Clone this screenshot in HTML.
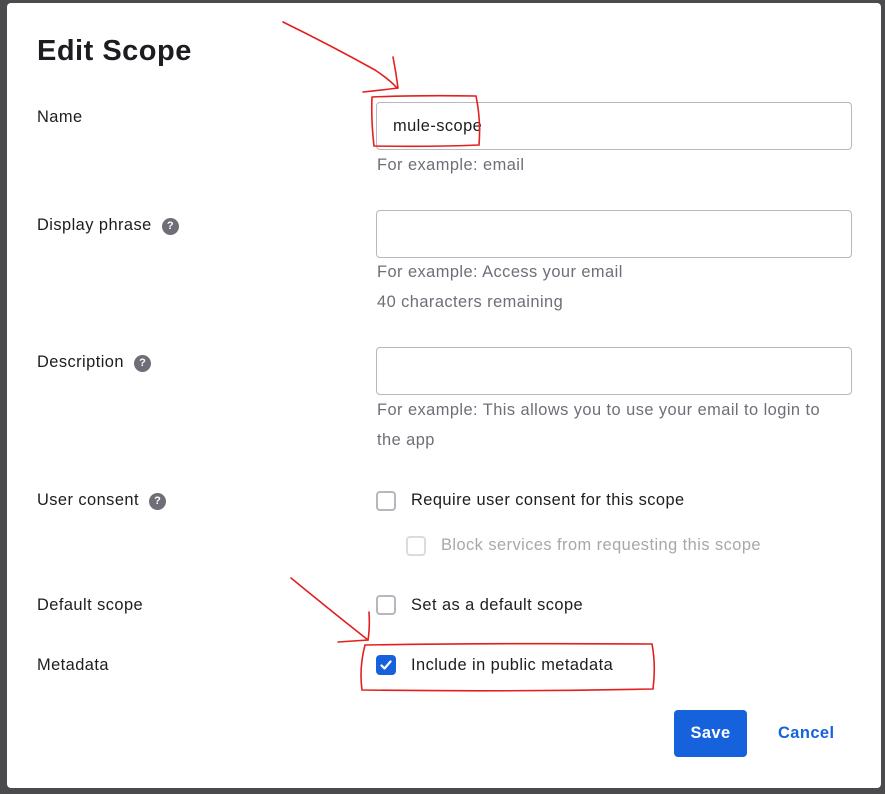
<!DOCTYPE html>
<html><head><meta charset="utf-8"><style>
*{box-sizing:border-box;margin:0;padding:0}
body{width:885px;height:794px;background:#4b4b4d;font-family:"Liberation Sans",sans-serif;position:relative;overflow:hidden;color:#1d1d21}
.modal{position:absolute;left:7px;top:3px;width:874px;height:785px;background:#fff;border-radius:4px;font-size:16.4px;letter-spacing:0.45px}
.abs{position:absolute}
h1{position:absolute;left:30px;top:32px;font-size:29px;font-weight:bold;color:#1d1d21;letter-spacing:0.5px}
.lbl{position:absolute;left:30px;color:#1d1d21}
.q{display:inline-block;width:17px;height:17px;border-radius:50%;background:#6e6e78;color:#fff;font-size:11px;font-weight:bold;text-align:center;line-height:17px;margin-left:10px;vertical-align:1px;letter-spacing:0}
.inp{position:absolute;left:369px;width:476px;height:48px;border:1px solid #b7b7bd;border-radius:4px;padding:14px 16px;color:#1d1d21}
.hint{position:absolute;left:370px;color:#6e6e78}
.cb{position:absolute;width:20px;height:20px;border:2px solid #b7b7bd;border-radius:4px;background:#fff}
.cbt{position:absolute;color:#1d1d21}
.btn{position:absolute;left:667px;top:707px;width:73px;height:47px;background:#1662dd;border-radius:4px;color:#fff;font-weight:bold;text-align:center;line-height:47px}
.cancel{position:absolute;left:771px;top:721px;color:#1662dd;font-weight:bold}
</style></head><body>
<div class="modal">
<h1>Edit Scope</h1>
<div class="lbl" style="top:105px">Name</div>
<div class="inp" style="top:99px">mule-scope</div>
<div class="hint" style="top:153px">For example: email</div>

<div class="lbl" style="top:213px">Display phrase<span class="q">?</span></div>
<div class="inp" style="top:207px"></div>
<div class="hint" style="top:260px">For example: Access your email</div>
<div class="hint" style="top:290px">40 characters remaining</div>

<div class="lbl" style="top:350px">Description<span class="q">?</span></div>
<div class="inp" style="top:344px"></div>
<div class="hint" style="top:398px">For example: This allows you to use your email to login to</div>
<div class="hint" style="top:428px">the app</div>

<div class="lbl" style="top:488px">User consent<span class="q">?</span></div>
<div class="cb" style="left:369px;top:488px"></div>
<div class="cbt" style="left:404px;top:488px">Require user consent for this scope</div>
<div class="cb" style="left:399px;top:533px;border-color:#dcdce0"></div>
<div class="cbt" style="left:434px;top:533px;color:#a7a7ae">Block services from requesting this scope</div>

<div class="lbl" style="top:593px">Default scope</div>
<div class="cb" style="left:369px;top:592px"></div>
<div class="cbt" style="left:404px;top:593px">Set as a default scope</div>

<div class="lbl" style="top:653px">Metadata</div>
<div class="cb" style="left:369px;top:652px;background:#1662dd;border-color:#1662dd">
<svg width="16" height="16" viewBox="0 0 16 16" style="position:absolute;left:0;top:0"><path d="M3.5 8.5l3 3 6-7" stroke="#fff" stroke-width="2.2" fill="none" stroke-linecap="round" stroke-linejoin="round"/></svg></div>
<div class="cbt" style="left:404px;top:653px">Include in public metadata</div>

<div class="btn">Save</div>
<div class="cancel">Cancel</div>
</div>
<svg class="abs" style="left:0;top:0" width="885" height="794">
<g stroke="#e3201e" stroke-width="1.6" fill="none" stroke-linecap="round">
<path d="M283 22 Q330 45 375 70 Q390 80 397 88"/>
<path d="M393 57 Q396 72 398 88 Q382 90 363 92"/>
<path d="M372 97 Q420 95 476 96 Q481 120 479 145 Q430 147 374 146 Q371 120 372 97"/>
<path d="M291 578 Q330 610 368 640"/>
<path d="M369 612 Q370 628 368 640 Q352 641 338 642"/>
<path d="M365 645 Q500 643 652 644 Q656 665 653 689 Q510 692 362 690 Q359 668 365 645"/>
</g></svg>
</body></html>
